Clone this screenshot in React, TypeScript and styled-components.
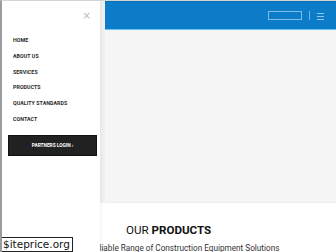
import React from "react";
import styled, { createGlobalStyle } from "styled-components";

const Global = createGlobalStyle`
  html, body { margin: 0; padding: 0; background: #fff; }
  body { font-family: Roboto, "Liberation Sans", Arial, sans-serif; }
  #root { width: 336px; height: 252px; overflow: hidden; }
`;

const Frame = styled.div`
  position: relative;
  width: 336px;
  height: 252px;
  box-sizing: border-box;
  border-left: 2px solid #9c9c9c;
  border-top: 1px solid #d4d4d4;
  display: flex;
  overflow: hidden;
`;

const Sidebar = styled.aside`
  width: 98px;
  flex-shrink: 0;
  background: #fff;
  position: relative;
  z-index: 2;
  box-shadow: 2px 0 3px rgba(0, 0, 0, 0.04);
  display: flex;
  flex-direction: column;
  padding: 0 0 0 6px;
  box-sizing: border-box;
`;

const CloseRow = styled.div`
  display: flex;
  justify-content: flex-end;
  padding: 10px 9px 0 0;
  height: 21px;
  box-sizing: border-box;
`;

const Close = styled.span`
  color: #b9b9b9;
  font-size: 10px;
  line-height: 10px;
  font-family: "DejaVu Sans", sans-serif;
`;

const Menu = styled.ul`
  list-style: none;
  margin: 0;
  padding: 15px 0 0 5px;
  display: flex;
  flex-direction: column;
  gap: 9.8px;
`;

const MenuItem = styled.li`
  font-size: 5.3px;
  line-height: 6px;
  font-weight: 700;
  color: #2a2a2a;
  text-transform: uppercase;
  letter-spacing: 0.05px;
`;

const LoginButton = styled.div`
  margin: 13px 0 0 0;
  width: 89px;
  height: 21px;
  background: #212121;
  border: 1px solid #111;
  box-sizing: border-box;
  display: flex;
  align-items: center;
  justify-content: center;
  color: #fff;
  font-size: 4.8px;
  font-weight: 700;
  text-transform: uppercase;
`;

const Main = styled.main`
  flex: 1;
  min-width: 0;
  padding-left: 5px;
  background: linear-gradient(to right, #f0f0f0, #f8f8f8);
  display: flex;
  flex-direction: column;
`;

const Header = styled.header`
  height: 29px;
  flex-shrink: 0;
  background: #0c7bc8;
  border-top: 1px solid #0a6fb5;
  border-bottom: 1px solid #6cc3f0;
  box-sizing: border-box;
  display: flex;
  align-items: center;
  justify-content: flex-end;
  padding-right: 12px;
`;

const OutlineButton = styled.div`
  width: 34px;
  height: 9px;
  border: 1px solid #7dbde9;
  box-sizing: border-box;
`;

const Divider = styled.div`
  width: 1px;
  height: 9px;
  background: #6fb4e4;
  margin: 0 7px 0 7px;
`;

const Burger = styled.div`
  width: 7px;
  display: flex;
  flex-direction: column;
  gap: 2px;
  padding-top: 2px;
  & > span {
    display: block;
    height: 1px;
    background: #8fc8ee;
  }
`;

const Hero = styled.section`
  height: 172px;
  flex-shrink: 0;
  background: #f5f5f5;
  border-bottom: 1px solid #ededed;
`;

const Products = styled.section`
  flex: 1;
  background: #fff;
  margin-left: -5px;
  padding: 20px 0 0 26px;
  display: flex;
  flex-direction: column;
`;

const Title = styled.h2`
  margin: 0;
  font-size: 11.6px;
  line-height: 14px;
  font-weight: 400;
  color: #111;
  & > b { font-weight: 700; }
`;

const Subtitle = styled.p`
  margin: 6px 0 0 -36px;
  white-space: nowrap;
  font-size: 8.2px;
  line-height: 10px;
  color: #333;
`;

const Watermark = styled.div`
  position: absolute;
  left: -2px;
  bottom: 0;
  z-index: 5;
  background: #fff;
  border: 1px solid #222;
  padding: 0 2px;
  font-family: "DejaVu Sans", Verdana, sans-serif;
  font-size: 10.5px;
  line-height: 13px;
  color: #111;
`;

const items = ["Home", "About Us", "Services", "Products", "Quality Standards", "Contact"];

export default function App() {
  return (
    <>
      <Global />
      <Frame>
        <Sidebar>
          <CloseRow>
            <Close>×</Close>
          </CloseRow>
          <Menu>
            {items.map((i) => (
              <MenuItem key={i}>{i}</MenuItem>
            ))}
          </Menu>
          <LoginButton>Partners Login ›</LoginButton>
        </Sidebar>
        <Main>
          <Header>
            <OutlineButton />
            <Divider />
            <Burger>
              <span />
              <span />
              <span />
            </Burger>
          </Header>
          <Hero />
          <Products>
            <Title>
              OUR <b>PRODUCTS</b>
            </Title>
            <Subtitle>Reliable Range of Construction Equipment Solutions</Subtitle>
          </Products>
        </Main>
        <Watermark>$iteprice.org</Watermark>
      </Frame>
    </>
  );
}
